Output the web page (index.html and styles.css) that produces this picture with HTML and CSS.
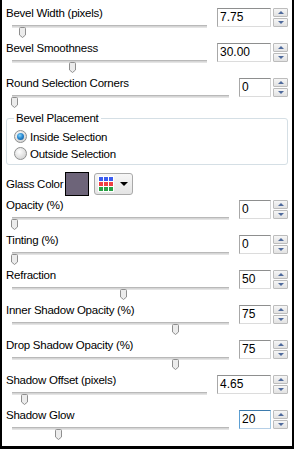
FILE: index.html
```html
<!DOCTYPE html>
<html>
<head>
<meta charset="utf-8">
<link rel="stylesheet" href="styles.css">
</head>
<body>
<div class="panel">
  <div class="row">
    <div class="left"><div class="label">Bevel Width (pixels)</div><div class="slider"><div class="track"></div><svg class="thumb" style="left:7px" width="8" height="12" viewBox="0 0 8 12"><path d="M1.5,0.5 H5.5 Q6.5,0.5 6.5,1.5 V8 L3.5,10.5 L0.5,8 V1.5 Q0.5,0.5 1.5,0.5 Z"/></svg></div></div>
    <div class="spin"><div class="field">7.75</div><div class="btns"><div class="btn up"></div><div class="btn down"></div></div></div>
  </div>
  <div class="row">
    <div class="left"><div class="label">Bevel Smoothness</div><div class="slider"><div class="track"></div><svg class="thumb" style="left:57px" width="8" height="12" viewBox="0 0 8 12"><path d="M1.5,0.5 H5.5 Q6.5,0.5 6.5,1.5 V8 L3.5,10.5 L0.5,8 V1.5 Q0.5,0.5 1.5,0.5 Z"/></svg></div></div>
    <div class="spin"><div class="field">30.00</div><div class="btns"><div class="btn up"></div><div class="btn down"></div></div></div>
  </div>
  <div class="row narrow">
    <div class="left"><div class="label">Round Selection Corners</div><div class="slider"><div class="track"></div><svg class="thumb" style="left:-1px" width="8" height="12" viewBox="0 0 8 12"><path d="M1.5,0.5 H5.5 Q6.5,0.5 6.5,1.5 V8 L3.5,10.5 L0.5,8 V1.5 Q0.5,0.5 1.5,0.5 Z"/></svg></div></div>
    <div class="spin"><div class="field">0</div><div class="btns"><div class="btn up"></div><div class="btn down"></div></div></div>
  </div>

  <fieldset class="group">
    <legend>Bevel Placement</legend>
    <label class="radio"><span class="dot checked"></span>Inside Selection</label>
    <label class="radio"><span class="dot"></span>Outside Selection</label>
  </fieldset>

  <div class="color-row">
    <span class="color-label">Glass Color</span>
    <span class="swatch"></span>
    <span class="picker">
      <span class="grid">
        <i class="b"></i><i class="b"></i><i class="b"></i>
        <i class="r"></i><i class="r"></i><i class="r"></i>
        <i class="g"></i><i class="g"></i><i class="g"></i>
      </span>
      <span class="caret"></span>
    </span>
  </div>

  <div class="row narrow">
    <div class="left"><div class="label">Opacity (%)</div><div class="slider"><div class="track"></div><svg class="thumb" style="left:-1px" width="8" height="12" viewBox="0 0 8 12"><path d="M1.5,0.5 H5.5 Q6.5,0.5 6.5,1.5 V8 L3.5,10.5 L0.5,8 V1.5 Q0.5,0.5 1.5,0.5 Z"/></svg></div></div>
    <div class="spin"><div class="field">0</div><div class="btns"><div class="btn up"></div><div class="btn down"></div></div></div>
  </div>
  <div class="row narrow">
    <div class="left"><div class="label">Tinting (%)</div><div class="slider"><div class="track"></div><svg class="thumb" style="left:-1px" width="8" height="12" viewBox="0 0 8 12"><path d="M1.5,0.5 H5.5 Q6.5,0.5 6.5,1.5 V8 L3.5,10.5 L0.5,8 V1.5 Q0.5,0.5 1.5,0.5 Z"/></svg></div></div>
    <div class="spin"><div class="field">0</div><div class="btns"><div class="btn up"></div><div class="btn down"></div></div></div>
  </div>
  <div class="row narrow">
    <div class="left"><div class="label">Refraction</div><div class="slider"><div class="track"></div><svg class="thumb" style="left:108px" width="8" height="12" viewBox="0 0 8 12"><path d="M1.5,0.5 H5.5 Q6.5,0.5 6.5,1.5 V8 L3.5,10.5 L0.5,8 V1.5 Q0.5,0.5 1.5,0.5 Z"/></svg></div></div>
    <div class="spin"><div class="field">50</div><div class="btns"><div class="btn up"></div><div class="btn down"></div></div></div>
  </div>
  <div class="row narrow">
    <div class="left"><div class="label">Inner Shadow Opacity (%)</div><div class="slider"><div class="track"></div><svg class="thumb" style="left:160px" width="8" height="12" viewBox="0 0 8 12"><path d="M1.5,0.5 H5.5 Q6.5,0.5 6.5,1.5 V8 L3.5,10.5 L0.5,8 V1.5 Q0.5,0.5 1.5,0.5 Z"/></svg></div></div>
    <div class="spin"><div class="field">75</div><div class="btns"><div class="btn up"></div><div class="btn down"></div></div></div>
  </div>
  <div class="row narrow">
    <div class="left"><div class="label">Drop Shadow Opacity (%)</div><div class="slider"><div class="track"></div><svg class="thumb" style="left:160px" width="8" height="12" viewBox="0 0 8 12"><path d="M1.5,0.5 H5.5 Q6.5,0.5 6.5,1.5 V8 L3.5,10.5 L0.5,8 V1.5 Q0.5,0.5 1.5,0.5 Z"/></svg></div></div>
    <div class="spin"><div class="field">75</div><div class="btns"><div class="btn up"></div><div class="btn down"></div></div></div>
  </div>
  <div class="row">
    <div class="left"><div class="label">Shadow Offset (pixels)</div><div class="slider"><div class="track"></div><svg class="thumb" style="left:9px" width="8" height="12" viewBox="0 0 8 12"><path d="M1.5,0.5 H5.5 Q6.5,0.5 6.5,1.5 V8 L3.5,10.5 L0.5,8 V1.5 Q0.5,0.5 1.5,0.5 Z"/></svg></div></div>
    <div class="spin"><div class="field">4.65</div><div class="btns"><div class="btn up"></div><div class="btn down"></div></div></div>
  </div>
  <div class="row narrow">
    <div class="left"><div class="label">Shadow Glow</div><div class="slider"><div class="track"></div><svg class="thumb" style="left:43px" width="8" height="12" viewBox="0 0 8 12"><path d="M1.5,0.5 H5.5 Q6.5,0.5 6.5,1.5 V8 L3.5,10.5 L0.5,8 V1.5 Q0.5,0.5 1.5,0.5 Z"/></svg></div></div>
    <div class="spin"><div class="field focus">20</div><div class="btns"><div class="btn up"></div><div class="btn down"></div></div></div>
  </div>
</div>
</body>
</html>
```
FILE: styles.css
```css
html, body {
  margin: 0;
  padding: 0;
  background: #fff;
}
body {
  font-family: "Liberation Sans", Arial, sans-serif;
  font-size: 11.5px;
  letter-spacing: -0.25px;
  color: #000;
}
.panel {
  width: 294px;
  height: 449px;
  box-sizing: border-box;
  border: 2px solid #000;
  border-top: 0;
  border-bottom-width: 3px;
  padding: 6px 4px 0 4px;
  overflow: hidden;
}
.row {
  display: flex;
  align-items: flex-start;
  height: 35px;
}
.left {
  flex: 1;
  min-width: 0;
}
.label {
  line-height: 14px;
  height: 14px;
  white-space: nowrap;
}
.slider {
  position: relative;
  height: 13px;
  margin: 0 10px 0 6px;
}
.track {
  margin-top: 5px;
  height: 1px;
  border-top: 1px solid #b9b9b9;
  border-bottom: 1px solid #e4e4e4;
  background: #d6d6d6;
}
.thumb {
  position: absolute;
  top: 2px;
}
.thumb path {
  fill: #ececec;
  stroke: #8f8f8f;
  stroke-width: 1;
}
.spin {
  display: flex;
  gap: 2px;
  margin-top: 2px;
}
.field {
  width: 54px;
  height: 19px;
  box-sizing: border-box;
  border: 1px solid;
  border-color: #8e8f8f #d4d4d4 #dcdcdc #a8a8a8;
  padding-left: 2px;
  line-height: 17px;
  font-size: 12px;
  letter-spacing: 0;
  background: #fff;
}
.narrow .field {
  width: 32px;
}
.field.focus {
  border-color: #3d7bad #a4c9e3 #b5cfe7 #5c9fd3;
}
.btns {
  display: flex;
  flex-direction: column;
  gap: 1px;
}
.btn {
  width: 15px;
  height: 9px;
  box-sizing: border-box;
  border: 1px solid #bcbcbc;
  border-radius: 1px;
  background: linear-gradient(#f6f6f6, #e2e2e2);
  display: flex;
  align-items: center;
  justify-content: center;
}
.btn::after {
  content: "";
  width: 0;
  height: 0;
  border-left: 3px solid transparent;
  border-right: 3px solid transparent;
}
.up::after {
  border-bottom: 3px solid #4f6a9c;
}
.down::after {
  border-top: 3px solid #4f6a9c;
}
.group {
  margin: 0;
  padding: 3px 0 2px 7px;
  border: 1px solid #d5dfe5;
  border-radius: 3px;
  min-width: 0;
}
.group legend {
  padding: 0 2px;
  line-height: 14px;
}
.radio {
  display: flex;
  align-items: center;
  height: 17px;
  gap: 3px;
  white-space: nowrap;
}
.dot {
  flex: none;
  width: 13px;
  height: 13px;
  box-sizing: border-box;
  border-radius: 50%;
  border: 1px solid #8e8f8f;
  background: radial-gradient(circle at 40% 35%, #ffffff 0%, #e6e6e6 45%, #c9c9c9 100%);
  display: flex;
  align-items: center;
  justify-content: center;
}
.dot.checked::after {
  content: "";
  width: 7px;
  height: 7px;
  border-radius: 50%;
  background: radial-gradient(circle at 40% 35%, #8ad4f5 0%, #2a8ad4 45%, #0c4d86 100%);
}
.color-row {
  display: flex;
  align-items: center;
  margin-top: 7px;
  height: 24px;
  margin-bottom: 2px;
}
.color-label {
  flex: none;
  width: 59px;
  white-space: nowrap;
}
.swatch {
  flex: none;
  width: 24px;
  height: 24px;
  box-sizing: border-box;
  border: 1px solid #000;
  background: #6d6479;
}
.picker {
  flex: none;
  margin-left: 5px;
  width: 39px;
  height: 22px;
  box-sizing: border-box;
  border: 1px solid #a9a9a9;
  border-radius: 3px;
  background: linear-gradient(#f6f6f6, #e4e4e4);
  display: flex;
  align-items: center;
  padding-left: 3px;
  gap: 6px;
}
.grid {
  display: grid;
  grid-template-columns: repeat(3, 4px);
  grid-template-rows: repeat(3, 4px);
  gap: 1px;
  padding: 1px;
  background: #fff;
}
.grid i {
  display: block;
}
.grid .b { background: #3b5cf0; }
.grid .r { background: #ef3f44; }
.grid .g { background: #27a143; }
.caret {
  width: 0;
  height: 0;
  border-left: 4px solid transparent;
  border-right: 4px solid transparent;
  border-top: 4px solid #000;
}
```
